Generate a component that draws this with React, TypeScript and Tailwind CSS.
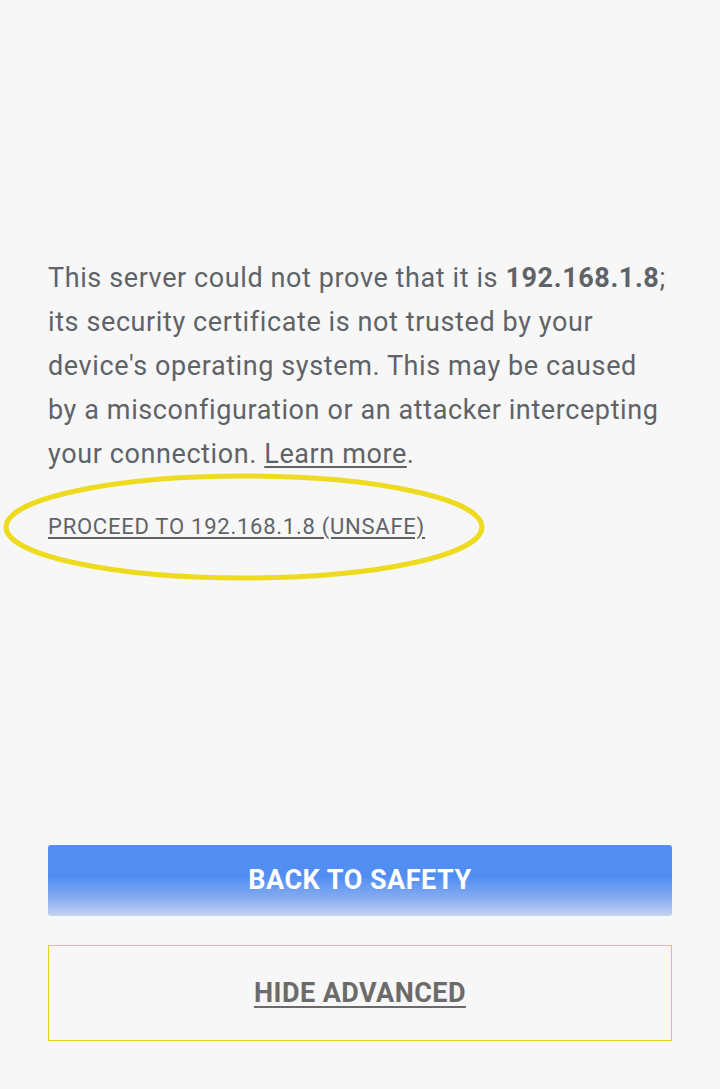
export default function App() {
  return (
    <div className="relative min-h-[1089px] w-[720px] bg-[#f7f7f7] px-[48px] pt-[256px] font-['Roboto',_'Liberation_Sans',_sans-serif] text-[#5f6368]">
      <p className="text-[27px] leading-[44px] tracking-[0.6px]">
        This server could not prove that it is <b className="font-bold">192.168.1.8</b>; its security certificate is not
        trusted by your device's operating system. This may be caused by a misconfiguration or an attacker
        intercepting your connection. <span className="underline underline-offset-[3px]">Learn more</span>.
      </p>

      <div className="mt-[36px] text-[22px] leading-[30px] tracking-[0.75px]">
        <span className="underline underline-offset-[3px]">PROCEED TO 192.168.1.8 (UNSAFE)</span>
      </div>

      {/* highlight marker */}
      <svg className="absolute left-[2px] top-[472px]" width="486" height="112" viewBox="0 0 486 112">
        <ellipse cx="242" cy="55" rx="238" ry="51" fill="none" stroke="#eedb1f" strokeWidth="5" />
      </svg>

      <div className="mt-[303px] flex flex-col">
        <button className="flex h-[71px] w-full items-center justify-center rounded-[3px] bg-[linear-gradient(to_bottom,#528ef2_0%,#528ef2_45%,#86acf0_75%,#c6d4ef_100%)] text-[27px] font-bold tracking-[0.5px] text-white">
          BACK TO SAFETY
        </button>
        <button className="mt-[29px] flex h-[96px] w-full items-center justify-center border border-[#e2cf22] text-[27px] font-bold tracking-[0.45px] text-[#6b6b6b]">
          <span className="underline underline-offset-[4px]">HIDE ADVANCED</span>
        </button>
      </div>
    </div>
  );
}
